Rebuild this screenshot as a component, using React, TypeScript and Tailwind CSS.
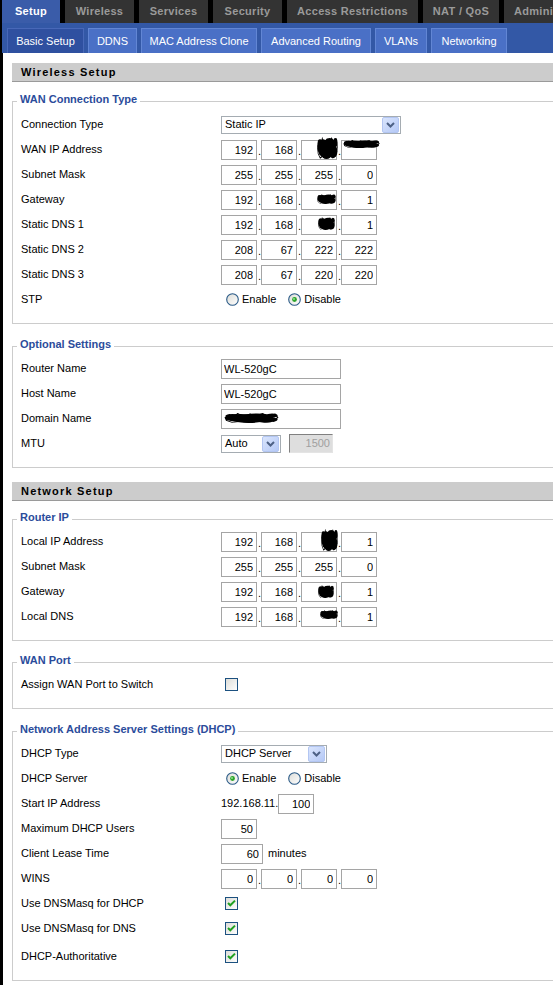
import React from "react";

type Blob = { l: number; t: number; w: number; h: number };

const mainTabs = [
  { label: "Setup", cls: "w-[58px] bg-[#3a5ca9] text-white" },
  { label: "Wireless", cls: "w-[69px] bg-[#333333] text-[#9a9a9a]" },
  { label: "Services", cls: "w-[69px] bg-[#333333] text-[#9a9a9a]" },
  { label: "Security", cls: "w-[69px] bg-[#333333] text-[#9a9a9a]" },
  { label: "Access Restrictions", cls: "w-[131px] bg-[#333333] text-[#9a9a9a]" },
  { label: "NAT / QoS", cls: "w-[76px] bg-[#333333] text-[#9a9a9a]" },
  { label: "Administration", cls: "w-[110px] bg-[#333333] text-[#9a9a9a] justify-start pl-[10px]" },
];

const subTabs = [
  { label: "Basic Setup", cls: "w-[77px] bg-[#2f50a0] border-[#4868b8]" },
  { label: "DDNS", cls: "w-[49px] bg-[#4a70c6] border-[#6286d4]" },
  { label: "MAC Address Clone", cls: "w-[116px] bg-[#4a70c6] border-[#6286d4]" },
  { label: "Advanced Routing", cls: "w-[110px] bg-[#4a70c6] border-[#6286d4]" },
  { label: "VLANs", cls: "w-[52px] bg-[#4a70c6] border-[#6286d4]" },
  { label: "Networking", cls: "w-[76px] bg-[#4a70c6] border-[#6286d4]" },
];

// redacted values in the screenshot are black scribbles
function Scribble({ b }: { b: Blob }) {
  return (
    <svg
      className="pointer-events-none absolute"
      style={{ left: b.l, top: b.t, width: b.w, height: b.h }}
      viewBox="0 0 40 20"
      preserveAspectRatio="none"
    >
      <g fill="#000">
        <ellipse cx="12" cy="10" rx="11" ry="8" />
        <ellipse cx="24" cy="8" rx="12" ry="7" />
        <ellipse cx="30" cy="13" rx="9" ry="6" />
        <ellipse cx="18" cy="15" rx="10" ry="5" />
        <ellipse cx="6" cy="6" rx="5" ry="4" />
        <ellipse cx="35" cy="5" rx="4" ry="4" />
      </g>
      <path d="M1 9 L4 3 L7 8 L10 1 L14 7 L19 2 L23 6 L28 1 L31 6 L37 2 L39 9 L36 17 L30 19 L24 16 L18 19 L12 17 L6 19 L2 15 Z" fill="none" stroke="#000" strokeWidth="1.2" />
    </svg>
  );
}

function Octet({ v, blob }: { v?: string; blob?: Blob }) {
  return (
    <div className="relative">
      <input
        readOnly
        value={v ?? ""}
        className="h-[20px] w-[36px] border border-[#a5a5a5] bg-white pr-[3px] text-right text-[11px] outline-none"
      />
      {blob && <Scribble b={blob} />}
    </div>
  );
}

function Ip({ parts, blobs = {} }: { parts: string[]; blobs?: Record<number, Blob> }) {
  return (
    <div className="flex items-center">
      {parts.map((p, i) => (
        <React.Fragment key={i}>
          {i > 0 && <span className="w-[4px] self-end pb-[3px] pl-[1px] leading-none">.</span>}
          <Octet v={p} blob={blobs[i]} />
        </React.Fragment>
      ))}
    </div>
  );
}

function TextBox({ v, w, blob }: { v: string; w: string; blob?: Blob }) {
  return (
    <div className="relative">
      <input
        readOnly
        value={v}
        className={`h-[20px] ${w} border border-[#a5a5a5] bg-white px-[2px] text-[11px] outline-none`}
      />
      {blob && <Scribble b={blob} />}
    </div>
  );
}

function ArrowButton() {
  return (
    <svg width="17" height="16" viewBox="0 0 17 16" className="shrink-0">
      <defs>
        <linearGradient id="xpbtn" x1="0" y1="0" x2="1" y2="1">
          <stop offset="0" stopColor="#dbe6fd" />
          <stop offset="1" stopColor="#b4c8f6" />
        </linearGradient>
      </defs>
      <rect x="0.5" y="0.5" width="16" height="15" rx="1.5" fill="url(#xpbtn)" stroke="#b3c6f2" />
      <path d="M5 6 L8.5 9.5 L12 6" fill="none" stroke="#4d6185" strokeWidth="2" />
    </svg>
  );
}

function Select({ v, w }: { v: string; w: string }) {
  return (
    <div className={`flex h-[18px] ${w} items-center border border-[#a5acb2] bg-white pr-[1px]`}>
      <span className="flex-1 pl-[3px]">{v}</span>
      <ArrowButton />
    </div>
  );
}

function Radio({ checked }: { checked?: boolean }) {
  return (
    <svg width="13" height="13" viewBox="0 0 13 13" className="shrink-0">
      <defs>
        <linearGradient id="xpradio" x1="0" y1="0" x2="1" y2="1">
          <stop offset="0" stopColor="#dcdcd7" />
          <stop offset="1" stopColor="#ffffff" />
        </linearGradient>
      </defs>
      <circle cx="6.5" cy="6.5" r="5.8" fill="url(#xpradio)" stroke="#2a5a87" strokeWidth="1.1" />
      {checked && (
        <>
          <circle cx="6.5" cy="6.5" r="2.4" fill="#2aa32a" />
          <circle cx="6" cy="6" r="0.9" fill="#9ae89a" />
        </>
      )}
    </svg>
  );
}

function RadioPair({ enabled }: { enabled: boolean }) {
  return (
    <div className="flex items-center">
      <span className="ml-[5px]">
        <Radio checked={enabled} />
      </span>
      <span className="ml-[3px]">Enable</span>
      <span className="ml-[12px]">
        <Radio checked={!enabled} />
      </span>
      <span className="ml-[3px]">Disable</span>
    </div>
  );
}

function Check({ checked }: { checked?: boolean }) {
  return (
    <svg width="13" height="13" viewBox="0 0 13 13" className="ml-[4px] shrink-0">
      <defs>
        <linearGradient id="xpcheck" x1="0" y1="0" x2="1" y2="1">
          <stop offset="0" stopColor="#dcdcd7" />
          <stop offset="1" stopColor="#ffffff" />
        </linearGradient>
      </defs>
      <rect x="0.5" y="0.5" width="12" height="12" fill="url(#xpcheck)" stroke="#1c5180" />
      {checked && <path d="M3 6 L5.3 8.3 L10 3.6" fill="none" stroke="#21a121" strokeWidth="2" />}
    </svg>
  );
}

function Header({ title, className }: { title: string; className: string }) {
  return (
    <div className={`flex h-[19px] items-center border-b border-[#9a9a9a] bg-[#cccccc] pl-[9px] text-[11px] font-bold tracking-[1.2px] ${className}`}>
      {title}
    </div>
  );
}

function Fieldset({
  legend,
  className,
  children,
}: {
  legend: string;
  className: string;
  children: React.ReactNode;
}) {
  return (
    <fieldset className={`border border-[#cccccc] ${className}`}>
      <legend className="ml-[4px] px-[3px] pb-[4px] text-[11px] leading-[12px] font-bold text-[#2b4c9b]">{legend}</legend>
      {children}
    </fieldset>
  );
}

function Row({ label, children, className = "" }: { label: string; children?: React.ReactNode; className?: string }) {
  return (
    <div className={`flex h-[25px] items-center pl-[8px] ${className}`}>
      <div className="w-[200px] shrink-0">{label}</div>
      <div className="flex items-center">{children}</div>
    </div>
  );
}

export default function App() {
  return (
    <div className="h-[985px] w-[553px] overflow-hidden bg-black font-['Liberation_Sans',Arial,sans-serif] text-[11px] text-black">
      <div className="flex h-full w-[720px] flex-col">
        {/* main tabs */}
        <div className="flex h-[23px] gap-[5px] pl-[2px]">
          {mainTabs.map((t) => (
            <div
              key={t.label}
              className={`flex h-[23px] shrink-0 items-center justify-center text-[11px] font-bold tracking-[0.3px] ${t.cls}`}
            >
              {t.label}
            </div>
          ))}
        </div>

        {/* sub tabs */}
        <div className="ml-[2px] flex h-[30px] items-end gap-[4px] bg-[#3358a6] pl-[5px]">
          {subTabs.map((t) => (
            <div
              key={t.label}
              className={`flex h-[25px] shrink-0 items-center justify-center border border-b-0 text-[11px] text-white ${t.cls}`}
            >
              {t.label}
            </div>
          ))}
        </div>

        <main className="ml-[3px] flex-1 bg-white pl-[9px] pt-[10px]">
          <Header title="Wireless Setup" className="" />

          <Fieldset legend="WAN Connection Type" className="mt-[11px] pt-[3px] pb-[11px]">
            <Row label="Connection Type">
              <Select v="Static IP" w="w-[180px]" />
            </Row>
            <Row label="WAN IP Address">
              <Ip
                parts={["192", "168", "", ""]}
                blobs={{ 2: { l: 16, t: -3, w: 21, h: 22 }, 3: { l: 2, t: 0, w: 37, h: 8 } }}
              />
            </Row>
            <Row label="Subnet Mask">
              <Ip parts={["255", "255", "255", "0"]} />
            </Row>
            <Row label="Gateway">
              <Ip parts={["192", "168", "", "1"]} blobs={{ 2: { l: 16, t: 4, w: 19, h: 10 } }} />
            </Row>
            <Row label="Static DNS 1">
              <Ip parts={["192", "168", "", "1"]} blobs={{ 2: { l: 17, t: 2, w: 17, h: 13 } }} />
            </Row>
            <Row label="Static DNS 2">
              <Ip parts={["208", "67", "222", "222"]} />
            </Row>
            <Row label="Static DNS 3">
              <Ip parts={["208", "67", "220", "220"]} />
            </Row>
            <Row label="STP">
              <RadioPair enabled={false} />
            </Row>
          </Fieldset>

          <Fieldset legend="Optional Settings" className="mt-[14px] pt-[2px] pb-[11px]">
            <Row label="Router Name">
              <TextBox v="WL-520gC" w="w-[120px]" />
            </Row>
            <Row label="Host Name">
              <TextBox v="WL-520gC" w="w-[120px]" />
            </Row>
            <Row label="Domain Name">
              <TextBox v="" w="w-[120px]" blob={{ l: 3, t: 4, w: 55, h: 10 }} />
            </Row>
            <Row label="MTU">
              <Select v="Auto" w="w-[60px]" />
              <div className="ml-[8px] h-[19px] w-[44px] border border-t-[#808080] border-l-[#808080] border-r-[#e4e4e4] border-b-[#e4e4e4] bg-[#dedede] pr-[2px] text-right leading-[17px] text-[#a0a0a0]">
                1500
              </div>
            </Row>
          </Fieldset>

          <Header title="Network Setup" className="mt-[14px]" />

          <Fieldset legend="Router IP" className="mt-[10px] pt-[2px] pb-[11px]">
            <Row label="Local IP Address">
              <Ip parts={["192", "168", "", "1"]} blobs={{ 2: { l: 20, t: -3, w: 17, h: 22 } }} />
            </Row>
            <Row label="Subnet Mask">
              <Ip parts={["255", "255", "255", "0"]} />
            </Row>
            <Row label="Gateway">
              <Ip parts={["192", "168", "", "1"]} blobs={{ 2: { l: 17, t: 3, w: 16, h: 13 } }} />
            </Row>
            <Row label="Local DNS">
              <Ip parts={["192", "168", "", "1"]} blobs={{ 2: { l: 19, t: 3, w: 18, h: 9 } }} />
            </Row>
          </Fieldset>

          <Fieldset legend="WAN Port" className="mt-[13px] pt-[2px] pb-[11px]">
            <Row label="Assign WAN Port to Switch">
              <Check />
            </Row>
          </Fieldset>

          <Fieldset legend="Network Address Server Settings (DHCP)" className="mt-[14px] pt-[2px] pb-[11px]">
            <Row label="DHCP Type">
              <Select v="DHCP Server" w="w-[106px]" />
            </Row>
            <Row label="DHCP Server">
              <RadioPair enabled={true} />
            </Row>
            <Row label="Start IP Address">
              <span>192.168.11.</span>
              <Octet v="100" />
            </Row>
            <Row label="Maximum DHCP Users">
              <Octet v="50" />
            </Row>
            <Row label="Client Lease Time">
              <input
                readOnly
                value="60"
                className="h-[20px] w-[42px] border border-[#a5a5a5] bg-white pr-[3px] text-right text-[11px] outline-none"
              />
              <span className="ml-[5px]">minutes</span>
            </Row>
            <Row label="WINS">
              <Ip parts={["0", "0", "0", "0"]} />
            </Row>
            <Row label="Use DNSMasq for DHCP">
              <Check checked />
            </Row>
            <Row label="Use DNSMasq for DNS">
              <Check checked />
            </Row>
            <Row label="DHCP-Authoritative" className="mt-[3px]">
              <Check checked />
            </Row>
          </Fieldset>
        </main>
      </div>
    </div>
  );
}
